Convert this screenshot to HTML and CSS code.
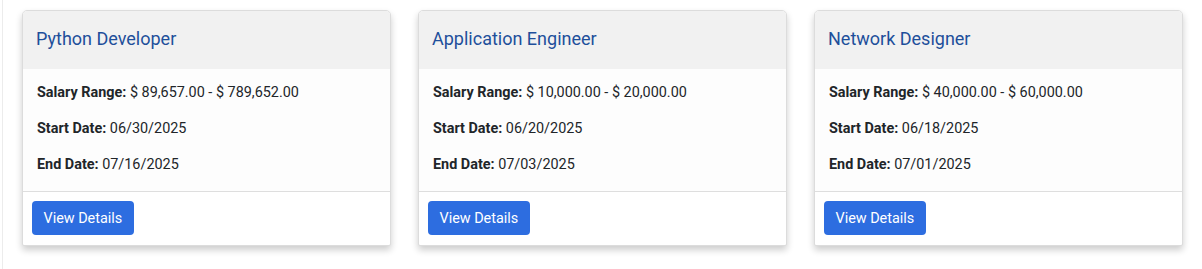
FILE: index.html
```html
<!DOCTYPE html>
<html lang="en">
<head>
    <meta charset="UTF-8">
    <meta name="viewport" content="width=device-width, initial-scale=1.0">
    <title>Jobs</title>
    <link rel="stylesheet" href="styles.css">
</head>
<body>
    <div class="wrap">
        <div class="job-list">
            <!-- Python Developer -->
            <div class="job-card">
                <div class="job-head"><h3>Python Developer</h3></div>
                <div class="job-body">
                    <p><b>Salary Range:</b> $ 89,657.00 - $ 789,652.00</p>
                    <p><b>Start Date:</b> 06/30/2025</p>
                    <p><b>End Date:</b> 07/16/2025</p>
                </div>
                <div class="job-foot"><button class="btn">View Details</button></div>
            </div>

            <!-- Application Engineer -->
            <div class="job-card">
                <div class="job-head"><h3>Application Engineer</h3></div>
                <div class="job-body">
                    <p><b>Salary Range:</b> $ 10,000.00 - $ 20,000.00</p>
                    <p><b>Start Date:</b> 06/20/2025</p>
                    <p><b>End Date:</b> 07/03/2025</p>
                </div>
                <div class="job-foot"><button class="btn">View Details</button></div>
            </div>

            <!-- Network Designer -->
            <div class="job-card">
                <div class="job-head"><h3>Network Designer</h3></div>
                <div class="job-body">
                    <p><b>Salary Range:</b> $ 40,000.00 - $ 60,000.00</p>
                    <p><b>Start Date:</b> 06/18/2025</p>
                    <p><b>End Date:</b> 07/01/2025</p>
                </div>
                <div class="job-foot"><button class="btn">View Details</button></div>
            </div>
        </div>
    </div>
</body>
</html>
```

FILE: styles.css
```css
body { margin: 0; font-family: Roboto, "Liberation Sans", Arial, sans-serif; color: #212529; background: #fff; }
.wrap { margin-left: 2px; border-left: 1px solid #ececec; height: 269px; box-sizing: border-box; padding: 10px 0 0 19px; }
.job-list { display: grid; grid-template-columns: repeat(3, 369px); column-gap: 27px; }
.job-card { border: 1px solid #dcdcdc; border-radius: 5px 5px 2px 2px; background: #fff; box-shadow: 0 4px 7px rgba(0, 0, 0, 0.2); overflow: hidden; }
.job-head { background: #f1f1f1; padding: 14px 13px 17px; }
.job-head h3 { margin: 0; font-size: 18px; font-weight: 400; line-height: 27px; color: #1e4f9b; }
.job-body { display: flex; flex-direction: column; gap: 15px; padding: 13px 14px 16px; background: #fdfdfd; border-bottom: 1px solid #dedede; }
.job-body p { margin: 0; font-size: 14.4px; line-height: 21px; }
.job-body b { font-weight: 700; }
.job-foot { padding: 9px 9px 10px; }
.btn { display: block; height: 34px; padding: 0 11.5px; background: #2d6de0; color: #fff; border: none; border-radius: 4px; font-family: inherit; font-size: 14.4px; cursor: pointer; }
.btn:hover { background: #245bc0; }
```
